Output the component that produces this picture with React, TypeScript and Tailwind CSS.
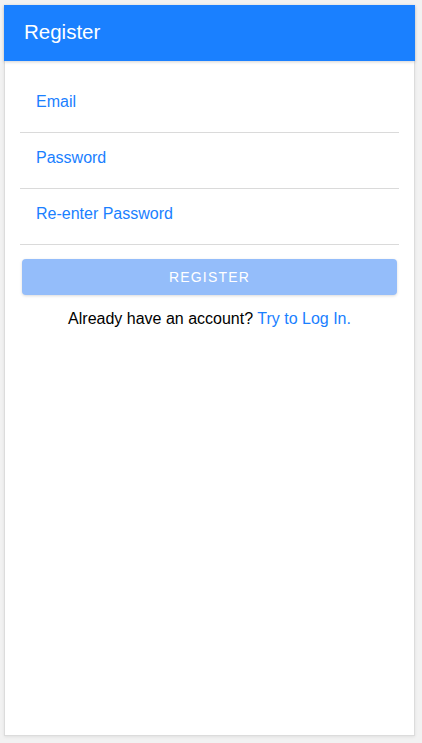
import React, { useState } from 'react';

const fields = [
  { label: 'Email', type: 'email' },
  { label: 'Password', type: 'password' },
  { label: 'Re-enter Password', type: 'password' },
];

const App: React.FC = () => {
  const [values, setValues] = useState<string[]>(['', '', '']);

  const setValue = (i: number, v: string) => {
    const next = [...values];
    next[i] = v;
    setValues(next);
  };

  const ready = values.every((v) => v.length > 0);

  return (
    <div className="min-h-screen bg-[#f2f2f2] pt-[5px] pl-[4px] font-['Liberation_Sans',Arial,sans-serif]">
      <div className="w-[411px] h-[731px] bg-white border border-[#dcdcdc] border-t-0 shadow-[0_1px_3px_rgba(0,0,0,0.08)] flex flex-col">
        {/* Header */}
        <header className="h-[56px] bg-[#1a80ff] flex items-center px-[20px] pb-[2px] shadow-[0_1px_3px_rgba(0,0,0,0.18)] -mx-px">
          <h1 className="text-white text-[20.5px]">Register</h1>
        </header>

        {/* Form */}
        <form className="flex flex-col px-[15px] pt-[16px]" onSubmit={(e) => e.preventDefault()}>
          {fields.map((f, i) => (
            <div key={f.label} className="h-[56px] border-b border-[#dadada] flex items-center pb-[5px]">
              <input
                type={f.type}
                placeholder={f.label}
                value={values[i]}
                onChange={(e) => setValue(i, e.target.value)}
                className="w-full px-[16px] text-[16px] text-[#1a80ff] placeholder:text-[#1a80ff] outline-none bg-transparent"
              />
            </div>
          ))}

          <button
            type="submit"
            disabled={!ready}
            className="mt-[14px] mx-[2px] h-[36px] rounded-[4px] bg-[#94bdfa] text-white text-[14px] tracking-[1.2px] shadow-[0_1px_3px_rgba(0,0,0,0.15)]"
          >
            REGISTER
          </button>

          <p className="mt-[12px] text-center text-[16px] text-black">
            Already have an account? <a href="#" className="text-[#1a80ff]">Try to Log In.</a>
          </p>
        </form>
      </div>
    </div>
  );
};

export default App;
